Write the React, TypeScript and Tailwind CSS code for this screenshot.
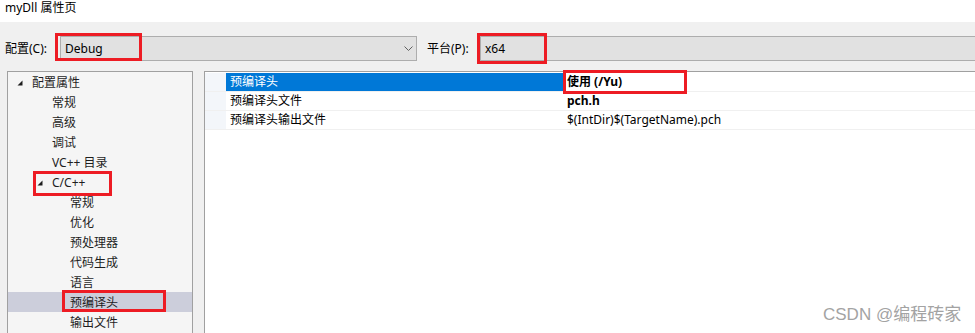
import React from "react";

const FONT = { fontFamily: '"Noto Sans", "Noto Sans CJK SC", sans-serif' };

function Tri() {
  return (
    <svg width="6" height="6" viewBox="0 0 6 6" className="shrink-0">
      <polygon points="5.5,0.5 5.5,5.5 0.5,5.5" fill="#1e1e1e" />
    </svg>
  );
}

type Item = { label: string; level: number; expander?: boolean; selected?: boolean; redBox?: boolean };

const items: Item[] = [
  { label: "配置属性", level: 0, expander: true },
  { label: "常规", level: 1 },
  { label: "高级", level: 1 },
  { label: "调试", level: 1 },
  { label: "VC++ 目录", level: 1 },
  { label: "C/C++", level: 1, expander: true, redBox: true },
  { label: "常规", level: 2 },
  { label: "优化", level: 2 },
  { label: "预处理器", level: 2 },
  { label: "代码生成", level: 2 },
  { label: "语言", level: 2 },
  { label: "预编译头", level: 2, selected: true, redBox: true },
  { label: "输出文件", level: 2 },
];

function TreeRow({ it }: { it: Item }) {
  const textLeft = it.level === 0 ? "pl-[24px]" : it.level === 1 ? "pl-[44px]" : "pl-[62px]";
  return (
    <div className={`relative h-[20px] flex items-center ${it.selected ? "bg-[#cccedb]" : ""}`}>
      {it.expander && (
        <div className={`absolute top-[8px] ${it.level === 0 ? "left-[9px]" : "left-[29px]"}`}>
          <Tri />
        </div>
      )}
      <span className={`${textLeft} text-[12px] leading-none text-[#1e1e1e] pt-[1px]`}>{it.label}</span>
      {it.redBox && it.level === 1 && (
        <div className="absolute left-[25px] top-[-1px] w-[79px] h-[25px] border-[3px] border-[#ed1c24]" />
      )}
      {it.redBox && it.level === 2 && (
        <div className="absolute left-[54px] top-[-2px] w-[104px] h-[22px] border-[3px] border-[#ed1c24]" />
      )}
    </div>
  );
}

type Prop = { name: string; value: string; bold?: boolean; selected?: boolean; redBox?: boolean };
const props: Prop[] = [
  { name: "预编译头", value: "使用 (/Yu)", bold: true, selected: true, redBox: true },
  { name: "预编译头文件", value: "pch.h", bold: true },
  { name: "预编译头输出文件", value: "$(IntDir)$(TargetName).pch" },
];

export default function App() {
  return (
    <div className="relative w-[975px] h-[333px] overflow-hidden bg-[#f0f0f0] text-black" style={FONT}>
      {/* Title bar */}
      <div className="h-[22px] bg-white flex items-start pl-[5px] pt-[1px]">
        <span className="text-[12px] leading-[14px]">myDll 属性页</span>
      </div>

      {/* Config row */}
      <div className="flex items-center pt-[14px] h-[39px] pl-[5px]">
        <span className="w-[55px] text-[12px] leading-none">配置(C):</span>
        <div className="relative w-[357px] h-[25px] bg-[#e1e1e1] border border-[#adadad] flex items-center">
          <span className="pl-[4px] text-[12px] leading-none">Debug</span>
          <svg className="absolute right-[3px] top-[9px]" width="9" height="6" viewBox="0 0 9 6">
            <polyline points="0.5,0.5 4.5,4.5 8.5,0.5" fill="none" stroke="#606060" strokeWidth="1" />
          </svg>
          <div className="absolute left-[-6px] top-[-4px] w-[87px] h-[28px] border-[3px] border-[#ed1c24]" />
        </div>
        <span className="ml-[10px] w-[53px] text-[12px] leading-none">平台(P):</span>
        <div className="relative flex-1 mr-[-10px] h-[25px] bg-[#e1e1e1] border border-[#adadad] flex items-center">
          <span className="pl-[4px] text-[12px] leading-none">x64</span>
          <div className="absolute left-[-4px] top-[-4px] w-[70px] h-[31px] border-[3px] border-[#ed1c24]" />
        </div>
      </div>

      {/* Main panels */}
      <div className="flex pt-[10px] pl-[7px] h-[300px]">
        {/* Tree */}
        <div className="w-[186px] h-[300px] bg-[#f5f5f5] border border-[#a0a0a0] pt-0">
          {items.map((it, i) => (
            <TreeRow key={i} it={it} />
          ))}
        </div>
        {/* Property grid */}
        <div className="ml-[11px] flex-1 mr-[-10px] h-[300px] bg-white border border-[#a0a0a0] pt-[1px]">
          {props.map((p, i) => (
            <div key={i} className="flex h-[19px] border-b border-[#f0f0f0]">
              <div className="w-[21px] bg-[#f3f6fa]" />
              <div
                className={`w-[337px] flex items-center pl-[4px] text-[12px] leading-none ${
                  p.selected ? "bg-[#0078d7] text-white" : "text-black"
                }`}
              >
                {p.name}
              </div>
              <div className="relative flex-1 flex items-center pl-[4px] text-[12px] leading-none">
                <span className={p.bold ? "font-bold" : ""}>{p.value}</span>
                {p.redBox && (
                  <div className="absolute left-0 top-[-3px] w-[124px] h-[24px] border-[3px] border-[#ed1c24]" />
                )}
              </div>
            </div>
          ))}
        </div>
      </div>

      {/* Watermark */}
      <div
        className="absolute left-[823px] top-[304px] text-[17px] leading-[22px] text-[#a3a3a3] whitespace-nowrap"
        style={{ fontFamily: '"Liberation Sans", "Noto Sans CJK SC", sans-serif' }}
      >
        CSDN @编程砖家
      </div>
    </div>
  );
}
